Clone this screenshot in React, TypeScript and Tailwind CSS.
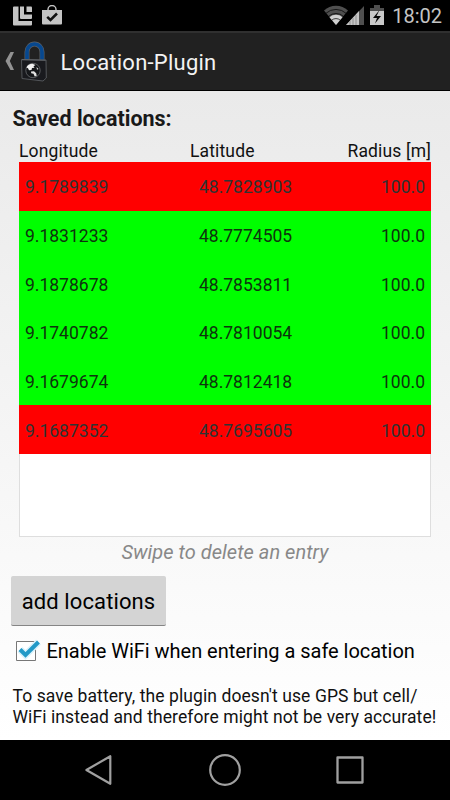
type SavedLocation = {
  longitude: string;
  latitude: string;
  radius: string;
  safe: boolean;
};

const LOCATIONS: SavedLocation[] = [
  { longitude: "9.1789839", latitude: "48.7828903", radius: "100.0", safe: false },
  { longitude: "9.1831233", latitude: "48.7774505", radius: "100.0", safe: true },
  { longitude: "9.1878678", latitude: "48.7853811", radius: "100.0", safe: true },
  { longitude: "9.1740782", latitude: "48.7810054", radius: "100.0", safe: true },
  { longitude: "9.1679674", latitude: "48.7812418", radius: "100.0", safe: true },
  { longitude: "9.1687352", latitude: "48.7695605", radius: "100.0", safe: false },
];

function StatusBar() {
  return (
    <div className="flex h-[31px] shrink-0 items-center justify-between bg-black pl-[13px] pr-2">
      <div className="flex items-center gap-[10px]">
        <svg width="19" height="20" viewBox="0 0 19 20" fill="#c4c4c4" aria-hidden="true">
          <path d="M1 0.5h4.5v14.500H19v3.500a1 1 0 0 1-1 1H1a1 1 0 0 1-1-1V1.500a1 1 0 0 1 1-1Z" />
          <path d="M7 0.500h4v8h8v3.500a1 1 0 0 1-1 1H8a1 1 0 0 1-1-1Z" />
          <path d="M13.500 0.500H18a1 1 0 0 1 1 1V6h-5.500Z" />
        </svg>
        <svg className="mb-[2px]" width="20" height="20" viewBox="0 0 20 20" aria-hidden="true">
          <path d="M6 5.500V4.500a4 4 0 0 1 8 0v1" fill="none" stroke="#c4c4c4" strokeWidth="1.400" />
          <path d="M0 5h20v13.500a1 1 0 0 1-1 1H1a1 1 0 0 1-1-1Z" fill="#c4c4c4" />
          <path d="m5.200 11.800 3.300 3.200 6.500-6.500" fill="none" stroke="#111" strokeWidth="2.500" />
        </svg>
      </div>
      <div className="flex items-center">
        <svg width="60" height="21" viewBox="0 0 60 21" aria-hidden="true">
          <path d="M0 5.500a17.500 17.500 0 0 1 24 0L12 20Z" fill="#4f4f4f" />
          <path d="M5.500 12.200a10 10 0 0 1 13 0L12 20Z" fill="#d0d0d0" />
          <path d="M1.800 8.400a15 15 0 0 1 20.400 0M4.400 11.500a11 11 0 0 1 15.200 0M7.700 15.200a6.500 6.500 0 0 1 8.600 0" fill="none" stroke="#000" strokeWidth="0.700" />
          <path d="M22 20 40 1v19Z" fill="#4f4f4f" />
          <path d="M22 20 35 6v14Z" fill="#c4c4c4" />
          <path d="M26 16v4M29 13v7M32 10v10" stroke="#909090" strokeWidth="1" />
          <path d="M50 0h6v3h-6zM46 3h14v3H46z" fill="#4f4f4f" />
          <path d="M46 6h14v14H46z" fill="#c9c9c9" />
          <path d="m55.500 5-6.500 8h4l-2 5.500 6-7.500h-4.500Z" fill="#080808" />
        </svg>
        <span className="ml-[8px] text-[20px] leading-[32px] text-[#c4c4c4]">18:02</span>
      </div>
    </div>
  );
}

function LockIcon() {
  return (
    <svg className="ml-[5px] shrink-0" width="28" height="42" viewBox="0 0 28 42" aria-hidden="true">
      <path d="M7 20V11a7.500 8 0 0 1 15 0v10" fill="none" stroke="#596068" strokeWidth="5" />
      <path d="M7 20V11a7.500 8 0 0 1 15 0v10" fill="none" stroke="#07488f" strokeWidth="3.700" />
      <path d="m1.500 18.500 24.500.5.3 18-3.300 3L2 37.500Z" fill="#191a1e" stroke="#53565a" strokeWidth="1" />
      <path d="m2 18.800 23.500.5" stroke="#71757a" strokeWidth="0.700" />
      <circle cx="13" cy="29.500" r="7.200" fill="#15171a" stroke="#74777a" strokeWidth="0.700" />
      <path d="M6.500 26.500c1-2.500 3.500-3.800 6-3.700l3 1.200-2 1.200 1 1.500-2.500.4-.5 2-2.500.2-1-2Z" fill="#f1f1f1" />
      <path d="m11 30.500 3-.2 2.200 2 .5 2.800-2 .4-1.200-2.700-2.300-.5ZM16.500 26l2 2-1.500.8Z" fill="#e3e3e3" />
    </svg>
  );
}

function ActionBar() {
  return (
    <div className="flex h-[60px] shrink-0 items-center border-b border-t-2 border-b-black border-t-[#303030] bg-[#212121] pl-[5px]">
      <svg className="mb-px shrink-0" width="10" height="20" viewBox="0 0 10 20" aria-hidden="true">
        <path d="M5.500 1h3.500L4.800 10 9 19H5.500L.5 10Z" fill="#929292" />
      </svg>
      <LockIcon />
      <h1 className="ml-[12.5px] pt-[2px] text-[22px] leading-[28px] tracking-[0.24px] text-[#f3f3f3]">Location-Plugin</h1>
    </div>
  );
}

function LocationRow({ item }: { item: SavedLocation }) {
  const rowClass = item.safe ? "bg-[#00ff00] text-[#0e330e]" : "bg-[#ff0000] text-[#2f3333]";

  return (
    <li className={`flex h-[48.7px] items-center px-[6px] pt-[2px] text-[17.5px] ${rowClass}`}>
      <span className="w-[174px]">{item.longitude}</span>
      <span className="flex-1">{item.latitude}</span>
      <span>{item.radius}</span>
    </li>
  );
}

function LocationList() {
  return (
    <section className="mx-[19px]">
      <div className="flex h-[22px] text-[17.5px] leading-[23px] tracking-[0.14px] text-[#111]">
        <span className="w-[171px]">Longitude</span>
        <span className="flex-1">Latitude</span>
        <span>Radius [m]</span>
      </div>
      <ul className="h-[375px] bg-white shadow-[inset_0_0_0_1px_#dedede]">
        {LOCATIONS.map((item) => (
          <LocationRow key={item.longitude} item={item} />
        ))}
      </ul>
    </section>
  );
}

function WifiOption() {
  return (
    <label className="ml-[15px] mt-[11px] flex h-[28px] items-center">
      <svg className="shrink-0" width="28" height="28" viewBox="0 0 28 28" aria-hidden="true">
        <path d="M1.500 4.500h19v19h-19z" fill="#fff" stroke="#777" strokeWidth="1" />
        <path d="m5 12.500 5.500 5.500 13-13" fill="none" stroke="#d9f2fb" strokeWidth="7" />
        <path d="m5 12.500 5.500 5.500L23.500 5" fill="none" stroke="#2299c7" strokeWidth="4" />
      </svg>
      <span className="ml-[3.5px] text-[20px] leading-[28px] tracking-[-0.03px] text-black">Enable WiFi when entering a safe location</span>
    </label>
  );
}

function NavigationBar() {
  return (
    <nav className="flex h-[60px] shrink-0 items-center justify-between bg-black pl-[82px] pr-[83px]">
      <svg width="34" height="34" viewBox="0 0 34 34" fill="none" stroke="#a0a0a0" strokeWidth="2.200" strokeLinejoin="round" aria-hidden="true">
        <path d="M28.300 3.200v27.600L4.400 17Z" />
      </svg>
      <svg width="34" height="34" viewBox="0 0 34 34" fill="none" stroke="#a0a0a0" strokeWidth="2.200" aria-hidden="true">
        <circle cx="17" cy="17" r="14.800" />
      </svg>
      <svg width="34" height="34" viewBox="0 0 34 34" fill="none" stroke="#a0a0a0" strokeWidth="2.300" strokeLinejoin="round" aria-hidden="true">
        <path d="M4.500 4.500h25v25h-25z" />
      </svg>
    </nav>
  );
}

export default function App() {
  return (
    <div className="flex h-[800px] w-[450px] flex-col overflow-hidden bg-black font-[Roboto,sans-serif]">
      <StatusBar />
      <ActionBar />
      <main className="flex flex-1 flex-col bg-linear-to-b from-[#eaeaea] to-white">
        <h2 className="ml-[12.5px] mt-[14px] h-[35px] text-[21.5px] font-bold leading-[28px] text-[#191919]">Saved locations:</h2>
        <LocationList />
        <p className="mt-[2px] text-center text-[20px] italic leading-[26px] tracking-[0.04px] text-[#888]">Swipe to delete an entry</p>
        <button className="ml-[11px] mt-[11px] h-[50px] w-[155px] rounded-[2px] border-b border-[#858585] bg-[#d4d4d4] pt-[2px] text-[22px] tracking-[0.1px] text-black">
          add locations
        </button>
        <WifiOption />
        <p className="ml-[12.5px] mt-[20px] whitespace-nowrap pt-px text-[17.5px] leading-[20.5px] tracking-[0.09px] text-[#111]">
          To save battery, the plugin doesn't use GPS but cell/
          <br />
          WiFi instead and therefore might not be very accurate!
        </p>
      </main>
      <NavigationBar />
    </div>
  );
}
